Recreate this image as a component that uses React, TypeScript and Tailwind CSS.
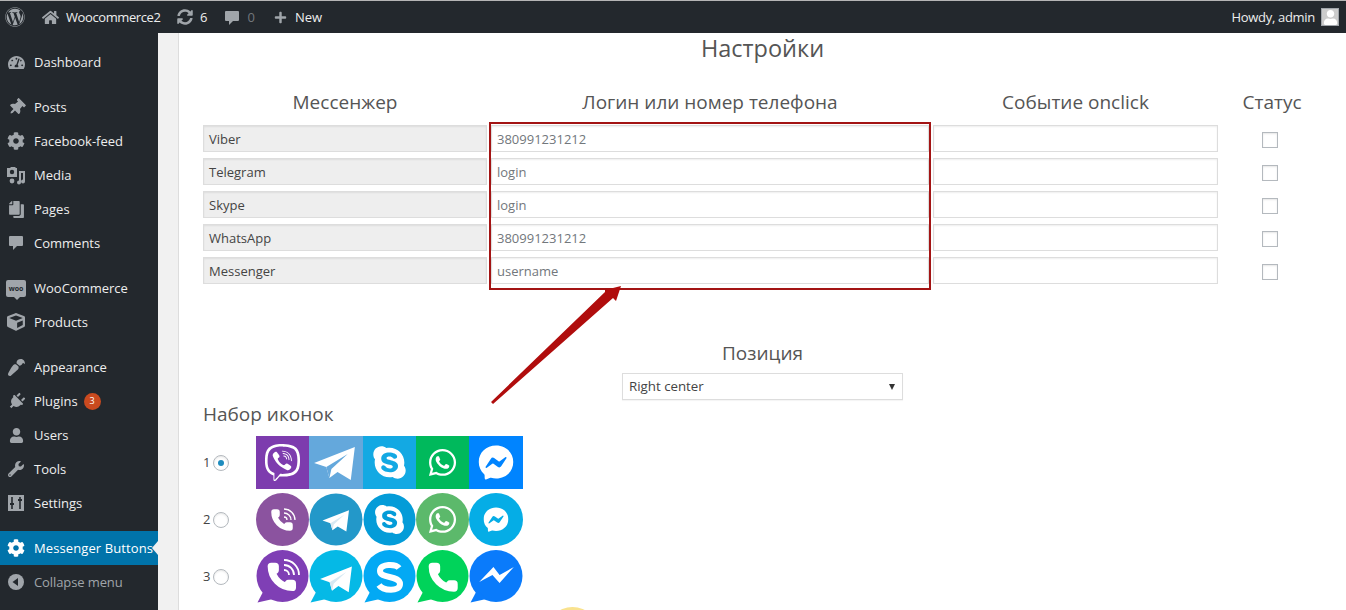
import {
  FaWordpress, FaHome, FaSyncAlt, FaPlus, FaTachometerAlt, FaThumbtack, FaCog, FaCopy,
  FaCube, FaPaintBrush, FaPlug, FaUser, FaWrench, FaViber, FaSkype, FaWhatsapp, FaFacebookMessenger,
} from 'react-icons/fa';
import type { ReactNode } from 'react';

const font = 'font-["Open_Sans",sans-serif]';

function MediaIcon() {
  return (
    <svg width="20" height="20" viewBox="0 0 20 20" fill="#a0a5aa">
      <path d="M1 3h3l1-1h4l1 1h1v9H1z" />
      <circle cx="6" cy="7" r="2.2" fill="#23282d" />
      <path d="M13 6h6v10.5a2 2 0 1 1-2-2V8h-2v9.5a2 2 0 1 1-2-2z" />
      <circle cx="6" cy="16" r="2.4" />
    </svg>
  );
}

function CommentIcon({ size = 16 }: { size?: number }) {
  return (
    <svg width={size} height={size} viewBox="0 0 16 16" fill="currentColor">
      <path d="M2 1h12a1 1 0 0 1 1 1v8a1 1 0 0 1-1 1H9l-4 4v-4H2a1 1 0 0 1-1-1V2a1 1 0 0 1 1-1z" />
    </svg>
  );
}

function WooIcon() {
  return (
    <span className="relative flex h-[17px] w-[20px] items-center justify-center rounded-[2px] bg-[#a0a5aa] text-[7px] font-bold leading-none text-[#23282d]">
      woo
      <span className="absolute bottom-[-3px] left-[8px] h-0 w-0 border-l-[3px] border-r-[3px] border-t-[3px] border-l-transparent border-r-transparent border-t-[#a0a5aa]" />
    </span>
  );
}

function SlidersIcon() {
  return (
    <svg width="18" height="18" viewBox="0 0 18 18">
      <rect x="1" y="1" width="16" height="16" fill="#a0a5aa" />
      <path d="M5 3v12M13 3v12" stroke="#23282d" strokeWidth="1.6" />
      <path d="M3 10h4M11 6h4" stroke="#23282d" strokeWidth="2" />
    </svg>
  );
}

function CollapseIcon() {
  return (
    <svg width="16" height="16" viewBox="0 0 16 16">
      <circle cx="8" cy="8" r="8" fill="#a0a5aa" />
      <path d="M10 4v8L4.500 8z" fill="#23282d" />
    </svg>
  );
}

const menu: { label: string; icon: ReactNode; gap?: boolean }[] = [
  { label: 'Dashboard', icon: <FaTachometerAlt size={17} /> },
  { label: 'Posts', icon: <FaThumbtack size={17} className="rotate-45" />, gap: true },
  { label: 'Facebook-feed', icon: <FaCog size={18} /> },
  { label: 'Media', icon: <MediaIcon /> },
  { label: 'Pages', icon: <FaCopy size={17} className="-scale-x-100" /> },
  { label: 'Comments', icon: <CommentIcon /> },
  { label: 'WooCommerce', icon: <WooIcon />, gap: true },
  { label: 'Products', icon: <FaCube size={18} /> },
  { label: 'Appearance', icon: <FaPaintBrush size={17} className="rotate-180" />, gap: true },
  { label: 'Plugins', icon: <FaPlug size={17} className="rotate-45" /> },
  { label: 'Users', icon: <FaUser size={15} /> },
  { label: 'Tools', icon: <FaWrench size={16} /> },
  { label: 'Settings', icon: <SlidersIcon /> },
];

const rows = [
  { name: 'Viber', hint: '380991231212' },
  { name: 'Telegram', hint: 'login' },
  { name: 'Skype', hint: 'login' },
  { name: 'WhatsApp', hint: '380991231212' },
  { name: 'Messenger', hint: 'username' },
];

const phone =
  'M13.832 16.568a1 1 0 0 0 1.213-.303l.355-.465A2 2 0 0 1 17 15h3a2 2 0 0 1 2 2v3a2 2 0 0 1-2 2A18 18 0 0 1 2 4a2 2 0 0 1 2-2h3a2 2 0 0 1 2 2v3a2 2 0 0 1-.8 1.6l-.468.351a1 1 0 0 0-.292 1.233 14 14 0 0 0 6.392 6.384';

function Handset({ x, y, s }: { x: number; y: number; s: number }) {
  return (
    <path
      d={phone}
      transform={`translate(${x} ${y}) scale(${s})`}
      fill="#fff"
      stroke="#fff"
      strokeWidth="1.5"
      strokeLinejoin="round"
    />
  );
}

function Plane({ fold }: { fold: string }) {
  return (
    <g>
      <path d="M5 27 45 11 41 44 28 36 20 42 17 31z" fill="#fff" />
      <path d="M17 31 38 18 22 33 20 42z" fill={fold} />
    </g>
  );
}

function Tile({ wide, children }: { wide?: boolean; children: ReactNode }) {
  return (
    <svg width={wide ? 54 : 53} height="53" viewBox="0 0 53 53" preserveAspectRatio="none" className="shrink-0">
      {children}
    </svg>
  );
}

const bubble = (color: string) => (
  <g fill={color}>
    <circle cx="26.500" cy="26" r="26" />
    <path d="M8 40 17 49 1.500 52.500z" />
  </g>
);

function SetOne() {
  return (
    <div className="flex">
      <Tile>
        <rect width="53" height="53" fill="#7d3cae" />
        <FaViber x={8} y={8} size={37} color="#fff" />
      </Tile>
      <Tile wide>
        <rect width="53" height="53" fill="#64a8dc" />
        <Plane fold="#64a8dc" />
      </Tile>
      <Tile>
        <rect width="53" height="53" fill="#13a9e3" />
        <FaSkype x={8} y={8} size={37} color="#fff" />
      </Tile>
      <Tile>
        <rect width="53" height="53" fill="#00b95c" />
        <FaWhatsapp x={11} y={11} size={31} color="#fff" />
      </Tile>
      <Tile wide>
        <rect width="53" height="53" fill="#0084ff" />
        <FaFacebookMessenger x={9} y={9} size={35} color="#fff" />
      </Tile>
    </div>
  );
}

function SetTwo() {
  return (
    <div className="flex">
      <Tile>
        <circle cx="26.500" cy="26.500" r="26.500" fill="#8b539f" />
        <Handset x={14} y={15} s={1} />
        <path d="M28 16a11 11 0 0 1 11 11M28 20a7 7 0 0 1 7 7M28 24a3 3 0 0 1 3 3" fill="none" stroke="#fff" strokeWidth="1.300" />
      </Tile>
      <Tile wide>
        <circle cx="26.500" cy="26.500" r="26" fill="#2398c9" />
        <g transform="translate(10 10) scale(.65)">
          <Plane fold="#d8e9f2" />
        </g>
      </Tile>
      <Tile>
        <circle cx="26.500" cy="26.500" r="26" fill="#049cd8" />
        <FaSkype x={10} y={10} size={33} color="#fff" />
      </Tile>
      <Tile>
        <circle cx="26.500" cy="26.500" r="26.500" fill="#5cb96b" />
        <FaWhatsapp x={11} y={11} size={31} color="#fff" />
      </Tile>
      <Tile wide>
        <circle cx="26.500" cy="26.500" r="26.500" fill="#05ade6" />
        <FaFacebookMessenger x={14} y={14} size={25} color="#fff" />
      </Tile>
    </div>
  );
}

function SetThree() {
  return (
    <div className="flex">
      <Tile>
        {bubble('#7f3fb5')}
        <Handset x={10} y={11} s={1.32} />
        <path d="M28 10a15 15 0 0 1 15 15M28 15a10 10 0 0 1 10 10M28 20a5 5 0 0 1 5 5" fill="none" stroke="#fff" strokeWidth="1.800" />
      </Tile>
      <Tile wide>
        {bubble('#05b9e6')}
        <g transform="translate(7 8) scale(.78)">
          <Plane fold="#d8e9f2" />
        </g>
      </Tile>
      <Tile>
        {bubble('#03a9f4')}
        <path d="M36 18c-3-4-19-5-19 3 0 8 20 4 20 13 0 8-17 7-21 1" fill="none" stroke="#fff" strokeWidth="6" />
      </Tile>
      <Tile>
        {bubble('#00d35a')}
        <Handset x={11} y={11} s={1.35} />
      </Tile>
      <Tile wide>
        {bubble('#0a7bfb')}
        <path d="M10 32 24 17l6 8 14-8-14 16-7-8z" fill="#fff" />
      </Tile>
    </div>
  );
}

const iconSets = [
  { n: 1, checked: true, icons: <SetOne /> },
  { n: 2, checked: false, icons: <SetTwo /> },
  { n: 3, checked: false, icons: <SetThree /> },
];

const headCell = 'text-center text-[19px] leading-[26px] text-[#555]';

export default function App() {
  return (
    <div className={`flex h-[610px] w-[1346px] flex-col overflow-hidden bg-white ${font}`}>
      <div className="h-px bg-[#b5b5b5]" />
      <header className="flex h-[32px] items-center bg-[#23282d] text-[13px] text-[#eee]">
        <FaWordpress size={20} color="#a0a5aa" className="ml-[5px]" />
        <FaHome size={17} color="#a0a5aa" className="ml-[17px]" />
        <span className="ml-[7px] w-[94px] whitespace-nowrap pt-[2px] tracking-[-0.4px]">Woocommerce2</span>
        <FaSyncAlt size={16} color="#a0a5aa" className="ml-[17px]" />
        <span className="ml-[7px] pt-[2px]">6</span>
        <span className="ml-[17px] mt-[2px] text-[#a0a5aa]">
          <CommentIcon />
        </span>
        <span className="ml-[7px] pt-[2px] text-[#72777c]">0</span>
        <FaPlus size={13} color="#a0a5aa" className="ml-[19px]" />
        <span className="ml-[8px] pt-[2px]">New</span>
        <span className="ml-auto pt-[2px] tracking-[-0.3px]">Howdy, admin</span>
        <span className="mx-[7px] ml-[6px] flex h-[18px] w-[18px] items-end justify-center overflow-hidden border border-[#a0a5aa] bg-[#ccc]">
          <FaUser size={15} color="#fff" />
        </span>
      </header>
      <div className="flex min-h-0 flex-1">
        <aside className="relative w-[158px] shrink-0 bg-[#23282d] pt-[12px] text-[13px] text-[#eee]">
          {menu.map((item) => (
            <div key={item.label} className={`flex h-[34px] items-center ${item.gap ? 'mt-[11px]' : ''}`}>
              <span className="flex w-[34px] justify-center pr-[2px] text-[#a0a5aa]">{item.icon}</span>
              <span className="pt-[2px]">{item.label}</span>
              {item.label === 'Plugins' && (
                <span className="ml-[6px] flex h-[17px] w-[17px] items-center justify-center rounded-full bg-[#ca4a1f] text-[9px] text-white">
                  3
                </span>
              )}
            </div>
          ))}
          <div className="relative mt-[11px] flex h-[34px] items-center bg-[#0073aa] text-white">
            <span className="flex w-[34px] justify-center pr-[2px]">
              <FaCog size={18} />
            </span>
            <span className="whitespace-nowrap pt-[2px] tracking-[0.1px]">Messenger Buttons</span>
            <span className="absolute right-0 top-[10px] h-0 w-0 border-y-[7px] border-r-[6px] border-y-transparent border-r-[#f1f1f1]" />
          </div>
          <div className="flex h-[34px] items-center text-[#a0a5aa]">
            <span className="flex w-[34px] justify-center pr-[2px]">
              <CollapseIcon />
            </span>
            <span className="pt-[2px] tracking-[-0.1px]">Collapse menu</span>
          </div>
        </aside>
        <div className="w-[20px] shrink-0 bg-[#f1f1f1]" />
        <main className="relative min-w-0 flex-1 border-l border-[#ddd] pl-[24px] pr-[24px] text-[#444]">
          <h1 className="h-[32px] text-center text-[23.5px] leading-[30px] text-[#555]">Настройки</h1>
          <div className="mt-[24px] grid grid-cols-[284px_438px_285px_100px] gap-x-[4px] gap-y-[6px] text-[13px]">
            <div className={`${headCell} mb-[4px] h-[26px]`}>Мессенжер</div>
            <div className={headCell}>Логин или номер телефона</div>
            <div className={headCell}>Событие onclick</div>
            <div className={headCell}>Статус</div>
            {rows.map((row) => (
              <div key={row.name} className="contents">
                <div className="flex h-[27px] items-center border border-[#ddd] bg-[#eee] px-[5px] pt-[2px] shadow-[inset_0_1px_2px_rgba(0,0,0,.07)]">
                  {row.name}
                </div>
                <input
                  placeholder={row.hint}
                  className="h-[27px] border border-[#ddd] bg-white px-[5px] shadow-[inset_0_1px_2px_rgba(0,0,0,.07)] outline-none placeholder:text-[#72777c]"
                />
                <input className="h-[27px] border border-[#ddd] bg-white px-[5px] shadow-[inset_0_1px_2px_rgba(0,0,0,.07)] outline-none" />
                <div className="-ml-[4px] flex items-center justify-center pt-[2px]">
                  <span className="h-[16px] w-[16px] border border-[#b4b9be] bg-white shadow-[inset_0_1px_2px_rgba(0,0,0,.1)]" />
                </div>
              </div>
            ))}
          </div>
          <h2 className={`mt-[56px] h-[26px] ${headCell}`}>Позиция</h2>
          <div className="mx-auto mt-[7px] flex h-[27px] w-[281px] items-center justify-between border border-[#ddd] bg-white pl-[6px] pr-[7px] text-[13.3px] shadow-[0_1px_1px_rgba(0,0,0,.04)]">
            Right center
            <span className="h-0 w-0 border-x-[3px] border-t-[6px] border-x-transparent border-t-[#333]" />
          </div>
          <h2 className="mt-px h-[26px] text-[19px] leading-[26px] text-[#555]">Набор иконок</h2>
          <div className="mt-[9px] flex flex-col gap-[4px]">
            {iconSets.map((set) => (
              <div key={set.n} className="flex h-[53px] items-center text-[13px]">
                <span className="w-[10px]">{set.n}</span>
                <span className="flex h-[16px] w-[16px] items-center justify-center rounded-full border border-[#b4b9be] bg-white shadow-[inset_0_1px_2px_rgba(0,0,0,.1)]">
                  {set.checked && <span className="h-[6px] w-[6px] rounded-full bg-[#1e8cbe]" />}
                </span>
                <span className="ml-[27px]">{set.icons}</span>
              </div>
            ))}
            <div className="ml-[343px] h-[53px] w-[53px] rounded-full bg-[#f9e28e]" />
          </div>
          <div className="pointer-events-none absolute left-[310px] top-[89px] h-[168px] w-[442px] border-2 border-[#a31414]" />
          <svg
            width="140"
            height="125"
            viewBox="0 0 140 125"
            className="pointer-events-none absolute left-[309px] top-[250px]"
          >
            <path d="M3 119 5 121 125 15 128 18 133 3 117 7 117 9z" fill="#b00d0d" />
          </svg>
        </main>
      </div>
    </div>
  );
}
